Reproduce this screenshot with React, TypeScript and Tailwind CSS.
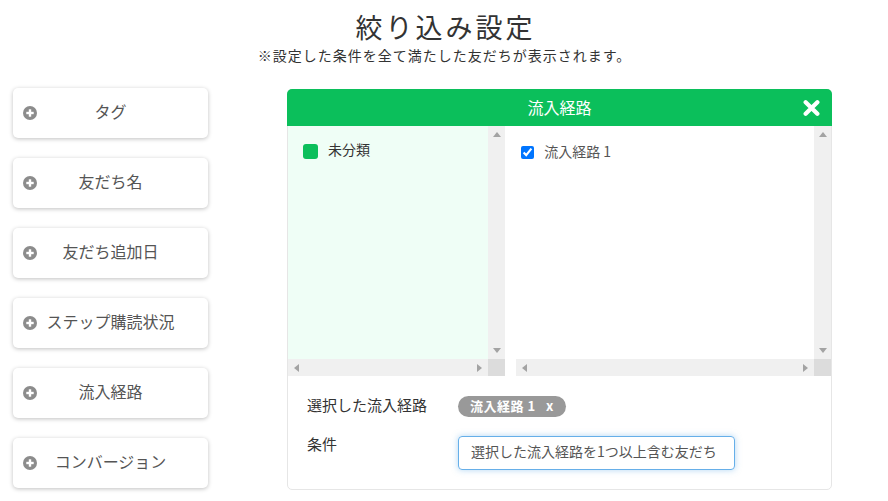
import React from "react";

const font = { fontFamily: '"Noto Sans CJK JP", "Noto Sans", sans-serif' };

function PlusIcon() {
  return (
    <svg width="14" height="14" viewBox="0 0 14 14" className="absolute left-[10px] top-1/2 -translate-y-1/2">
      <circle cx="7" cy="7" r="7" fill="#8c8c8c" />
      <rect x="3.3" y="5.8" width="7.4" height="2.4" fill="#fff" />
      <rect x="5.8" y="3.3" width="2.4" height="7.4" fill="#fff" />
    </svg>
  );
}

function SideButton({ label }: { label: string }) {
  return (
    <div className="relative flex h-[50px] w-[195px] items-center justify-center rounded-[5px] bg-white text-[16px] text-[#555] shadow-[0_1px_4px_rgba(0,0,0,0.25)]">
      <PlusIcon />
      <span className="relative -top-[2px]">{label}</span>
    </div>
  );
}

function Tri({ dir }: { dir: "up" | "down" | "left" | "right" }) {
  const pts =
    dir === "up"
      ? "0,5 4,0 8,5"
      : dir === "down"
      ? "0,0 8,0 4,5"
      : dir === "left"
      ? "5,0 5,8 0,4"
      : "0,0 0,8 5,4";
  const w = dir === "up" || dir === "down" ? 8 : 5;
  const h = dir === "up" || dir === "down" ? 5 : 8;
  return (
    <svg width={w} height={h} viewBox={`0 0 ${w} ${h}`}>
      <polygon points={pts} fill="#a3a3a3" />
    </svg>
  );
}

function ListBox({
  bg,
  children,
  className,
}: {
  bg: string;
  children: React.ReactNode;
  className: string;
}) {
  return (
    <div className={`flex h-[250px] flex-col ${className}`}>
      <div className="flex flex-1">
        <div className={`flex-1 ${bg}`}>{children}</div>
        <div className="flex w-[17px] flex-col items-center justify-between bg-[#f0f0f0] py-[6px]">
          <Tri dir="up" />
          <Tri dir="down" />
        </div>
      </div>
      <div className="flex h-[17px]">
        <div className="flex flex-1 items-center justify-between bg-[#f0f0f0] px-[6px]">
          <Tri dir="left" />
          <Tri dir="right" />
        </div>
        <div className="w-[17px] bg-[#dcdcdc]" />
      </div>
    </div>
  );
}

export default function App() {
  return (
    <div className="relative h-[501px] w-[888px] overflow-hidden bg-white text-[#333]" style={font}>
      <div className="flex h-[69px] flex-col items-center pt-[8px]">
        <div className="pl-[3px] text-[27px] leading-[38px] tracking-[3px] text-[#333]">絞り込み設定</div>
        <div className="relative -top-[1px] pl-[1px] text-[14px] leading-[20px] tracking-[1px] text-[#333]">
          ※設定した条件を全て満たした友だちが表示されます。
        </div>
      </div>

      <div className="mt-[19px] flex">
        <div className="ml-[13px] flex flex-col gap-[20px]">
          <SideButton label="タグ" />
          <SideButton label="友だち名" />
          <SideButton label="友だち追加日" />
          <SideButton label="ステップ購読状況" />
          <SideButton label="流入経路" />
          <SideButton label="コンバージョン" />
        </div>

        <div className="ml-[79px] mt-[1px] flex h-[401px] w-[545px] flex-col rounded-[5px] border border-[#e6e6e6]">
          <div className="relative -mx-px -mt-px flex h-[37px] items-center justify-center rounded-t-[5px] bg-[#0bbf5b] text-[16px] text-white">
            <span className="relative -top-[1px]">流入経路</span>
            <svg
              width="17"
              height="17"
              viewBox="0 0 16 16"
              className="absolute right-[12px] top-1/2 -translate-y-1/2"
            >
              <path d="M2.5 2.5 L13.5 13.5 M13.5 2.5 L2.5 13.5" stroke="#fff" strokeWidth="4" strokeLinecap="round" />
            </svg>
          </div>

          <div className="flex">
            <ListBox bg="bg-[#effef6]" className="w-[218px]">
              <div className="flex items-center pl-[15px] pt-[15px]">
                <span className="h-[15px] w-[15px] rounded-[3px] bg-[#0bbf5b]" />
                <span className="relative -top-[2px] ml-[10px] text-[14px] text-[#333]">未分類</span>
              </div>
            </ListBox>
            <ListBox bg="bg-white" className="ml-[11px] w-[316px]">
              <div className="flex items-center pl-[5px] pt-[16px]">
                <input
                  type="checkbox"
                  checked
                  readOnly
                  className="m-0 h-[13px] w-[13px] accent-[#0075ff]"
                />
                <span className="relative -top-[1px] ml-[10px] text-[14px] text-[#555]">流入経路 1</span>
              </div>
            </ListBox>
          </div>

          <div className="flex flex-col px-[19px] pt-[19px]">
            <div className="flex items-center">
              <div className="relative -top-[1px] w-[151px] text-[15px] text-[#333]">選択した流入経路</div>
              <div className="flex h-[21px] items-center rounded-full bg-[#999] px-[12px] text-[13px] font-bold tracking-[0.5px] text-white">
                <span className="relative -top-[1px]">流入経路 1&nbsp;&nbsp;&nbsp;x</span>
              </div>
            </div>
            <div className="mt-[18px] flex items-start">
              <div className="relative -top-[3px] w-[151px] text-[15px] text-[#333]">条件</div>
              <div className="flex h-[34px] w-[277px] items-center rounded-[4px] border border-[#66afe9] px-[12px] text-[14px] text-[#555] shadow-[0_0_6px_rgba(102,175,233,0.5)]">
                <span className="relative -top-[1px]">選択した流入経路を1つ以上含む友だち</span>
              </div>
            </div>
          </div>
        </div>
      </div>
    </div>
  );
}
